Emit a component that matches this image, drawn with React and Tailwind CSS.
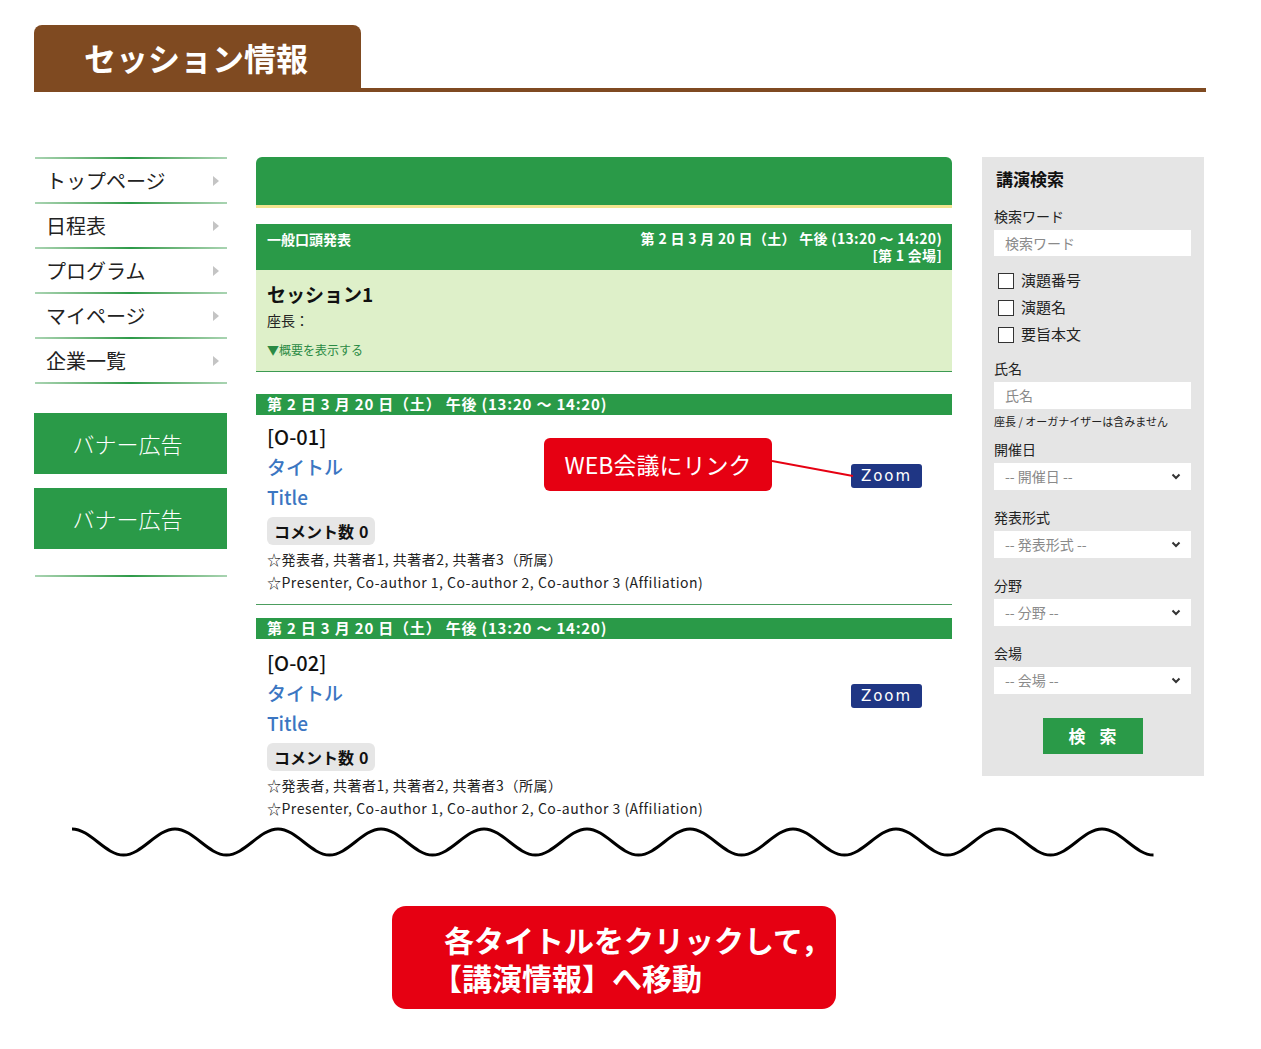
import React from 'react';

const NAV = ['トップページ', '日程表', 'プログラム', 'マイページ', '企業一覧'];

const SESSIONS = [
  { id: '[O-01]', callout: true },
  { id: '[O-02]', callout: false },
];

function NavLine() {
  return <div className="h-[2px] bg-linear-to-r from-[#a9d4b2] via-[#2a9a48] to-[#a9d4b2]" />;
}

function Arrow() {
  return (
    <svg width="6" height="10" viewBox="0 0 6 10" className="mr-[8px]">
      <polygon points="0,0 6,5 0,10" fill="#c4c4c4" />
    </svg>
  );
}

function Chevron() {
  return (
    <svg width="10" height="7" viewBox="0 0 10 7">
      <polyline points="1.5,1.5 5,5 8.5,1.5" fill="none" stroke="#333" strokeWidth="2" />
    </svg>
  );
}

function Wave() {
  // 21 half waves, crest to trough
  const w = 51.5;
  const top = 2;
  const bot = 28;
  let d = `M0 ${top}`;
  for (let i = 0; i < 21; i++) {
    const x0 = i * w;
    const from = i % 2 === 0 ? top : bot;
    const to = i % 2 === 0 ? bot : top;
    d += ` C${x0 + w * 0.36} ${from} ${x0 + w * 0.64} ${to} ${x0 + w} ${to}`;
  }
  return (
    <svg width="1084" height="30" viewBox="0 0 1084 30" className="block">
      <path d={d} fill="none" stroke="#000" strokeWidth="3" />
    </svg>
  );
}

function SelectBox({ label }) {
  return (
    <div className="mt-[4px] flex h-[27px] items-center justify-between bg-white pl-[11px] pr-[10px] text-[14px] text-[#8a8a8a]">
      <span>-- {label} --</span>
      <Chevron />
    </div>
  );
}

function Talk({ id, callout, first, last }) {
  return (
    <div className={first ? 'mt-[22px]' : 'mt-[13px]'}>
      <div className="flex h-[21px] items-center bg-[#2a9a48] pl-[11px] text-[15px] font-bold tracking-[0.8px] text-white">
        第 2 日 3 月 20 日（土） 午後 (13:20 ～ 14:20)
      </div>
      <div className={`relative flex pb-[10px] pl-[11px] pr-[30px] ${last ? '' : 'border-b border-[#4c9d5e]'}`}>
        <div className={`flex-1 ${first ? 'pt-[7px]' : 'pt-[9px]'}`}>
          <div className="text-[20px] font-medium leading-[30px] text-[#111]">{id}</div>
          <div className="text-[19px] font-medium leading-[30px] text-[#3b76c2]">タイトル</div>
          <div className="text-[19px] font-medium leading-[30px] text-[#3b76c2]">Title</div>
          <div className="mt-[5px] inline-flex h-[28px] items-center rounded-[6px] bg-[#e6e6e6] px-[7px] text-[16px] font-bold text-[#111]">
            コメント数<span className="ml-[5px]">0</span>
          </div>
          <div className="mt-[3px] text-[14px] leading-[23px] tracking-[0.5px] text-[#222]">☆発表者, 共著者1, 共著者2, 共著者3（所属）</div>
          <div className="text-[14px] leading-[23px] tracking-[0.5px] text-[#222]">☆Presenter, Co-author 1, Co-author 2, Co-author 3 (Affiliation)</div>
        </div>
        <div className={first ? 'pt-[49px]' : 'pt-[45px]'}>
          <div className="flex h-[24px] w-[71px] items-center justify-center rounded-[3px] bg-[#1f3684] font-['DejaVu_Sans',sans-serif] text-[15px] tracking-[2px] text-white">
            Zoom
          </div>
        </div>
        {callout && (
          <>
            <div className="absolute left-[288px] top-[23px] flex h-[53px] w-[228px] items-center justify-center rounded-[6px] bg-[#e60012] text-[23px] text-white">
              WEB会議にリンク
            </div>
            <svg className="absolute left-[516px] top-[44px]" width="82" height="20" viewBox="0 0 82 20">
              <line x1="0" y1="2" x2="81" y2="17" stroke="#e60012" strokeWidth="2" />
            </svg>
          </>
        )}
      </div>
    </div>
  );
}

export default function App() {
  return (
    <div className="w-[1261px] min-h-[1049px] bg-white pt-[25px] font-['Noto_Sans_CJK_JP','Noto_Sans',sans-serif] text-[#222]">
      {/* heading tab */}
      <div className="ml-[34px] w-[1172px]">
        <div className="flex h-[63px] w-[327px] items-center rounded-t-[8px] bg-[#7f4a21] pl-[50px]">
          <h1 className="text-[32px] font-bold text-white">セッション情報</h1>
        </div>
        <div className="h-[4px] bg-[#7f4a21]" />
      </div>

      <div className="ml-[34px] mt-[65px] flex items-start">
        {/* left nav */}
        <div className="w-[193px]">
          <div className="pl-[1px]">
            <NavLine />
            {NAV.map((n) => (
              <div key={n}>
                <div className="flex h-[43px] items-center justify-between pl-[11px] text-[20px] text-[#222]">
                  <span>{n}</span>
                  <Arrow />
                </div>
                <NavLine />
              </div>
            ))}
          </div>
          <div className="mt-[29px] flex h-[61px] items-center justify-center bg-[#2a9a48] pr-[6px] text-[22px] font-light text-white">
            バナー広告
          </div>
          <div className="mt-[14px] flex h-[61px] items-center justify-center bg-[#2a9a48] pr-[6px] text-[22px] font-light text-white">
            バナー広告
          </div>
          <div className="ml-[1px] mt-[26px]">
            <NavLine />
          </div>
        </div>

        {/* center */}
        <div className="ml-[29px] w-[696px]">
          <div className="h-[51px] rounded-t-[6px] border-b-[3px] border-[#f2e48f] bg-[#2a9a48]" />
          <div className="mt-[16px] flex h-[46px] items-start justify-between bg-[#2a9a48] pl-[11px] pr-[10px] pt-[6px] text-[14px] font-bold leading-[17px] text-white">
            <span className="pt-[1px]">一般口頭発表</span>
            <div className="text-right tracking-[0.3px]">
              <div>第 2 日 3 月 20 日（土） 午後 (13:20 ～ 14:20)</div>
              <div>[第 1 会場]</div>
            </div>
          </div>
          <div className="h-[102px] border-b border-[#3c9a52] bg-[#def0c9] pl-[11px] pt-[11px]">
            <div className="text-[19px] font-bold leading-[26px] text-[#111]">セッション1</div>
            <div className="mt-[3px] text-[14px] leading-[20px] text-[#222]">座長：</div>
            <div className="mt-[11px] text-[12px] leading-[18px] text-[#2a8a44]">▼概要を表示する</div>
          </div>
          {SESSIONS.map((s, i) => (
            <Talk key={s.id} id={s.id} callout={s.callout} first={i === 0} last={i === SESSIONS.length - 1} />
          ))}
        </div>

        {/* right search */}
        <div className="ml-[30px] w-[222px] bg-[#e5e5e5] pb-[22px] pl-[12px] pr-[13px] pt-[10px]">
          <div className="pl-[2px] text-[17px] font-bold leading-[24px] text-[#111]">講演検索</div>
          <div className="mt-[15px] text-[14px] leading-[20px]">検索ワード</div>
          <div className="mt-[4px] flex h-[26px] items-center bg-white pl-[11px] text-[14px] text-[#8a8a8a]">検索ワード</div>
          <div className="mt-[11px]">
            {['演題番号', '演題名', '要旨本文'].map((c) => (
              <div key={c} className="flex h-[27px] items-center pl-[4px]">
                <span className="h-[16px] w-[16px] border border-[#333] bg-white" />
                <span className="ml-[7px] text-[15px]">{c}</span>
              </div>
            ))}
          </div>
          <div className="mt-[10px] text-[14px] leading-[20px]">氏名</div>
          <div className="mt-[4px] flex h-[27px] items-center bg-white pl-[11px] text-[14px] text-[#8a8a8a]">氏名</div>
          <div className="mt-[4px] text-[11px] leading-[16px]">座長 / オーガナイザーは含みません</div>
          <div className="mt-[10px] text-[14px] leading-[20px]">開催日</div>
          <SelectBox label="開催日" />
          <div className="mt-[17px] text-[14px] leading-[20px]">発表形式</div>
          <SelectBox label="発表形式" />
          <div className="mt-[17px] text-[14px] leading-[20px]">分野</div>
          <SelectBox label="分野" />
          <div className="mt-[17px] text-[14px] leading-[20px]">会場</div>
          <SelectBox label="会場" />
          <div className="mt-[24px] flex justify-center">
            <div className="flex h-[36px] w-[100px] items-center justify-center bg-[#2a9a48] text-[17px] font-bold tracking-[14px] text-white">
              <span className="mr-[-14px]">検索</span>
            </div>
          </div>
        </div>
      </div>

      <div className="ml-[72px] mt-[-3px]">
        <Wave />
      </div>

      <div className="ml-[392px] mt-[49px] flex h-[103px] w-[444px] flex-col justify-center rounded-[14px] bg-[#e60012] pl-[40px] text-[30px] font-bold leading-[38px] text-white">
        <div className="pl-[12px]">各タイトルをクリックして，</div>
        <div>【講演情報】へ移動</div>
      </div>
    </div>
  );
}
